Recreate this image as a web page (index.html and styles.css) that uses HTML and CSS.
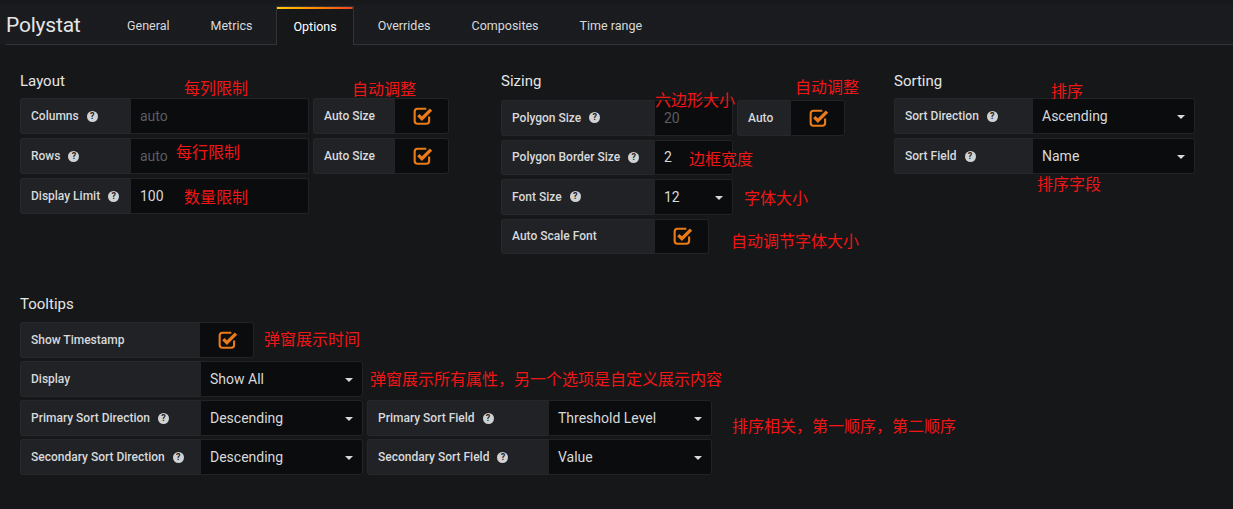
FILE: index.html
```html
<!DOCTYPE html>
<html lang="zh">
<head>
<meta charset="utf-8">
<title>Polystat Options</title>
<link rel="stylesheet" href="styles.css">
</head>
<body>
<div class="page">
  <header class="topbar">
    <div class="topbar-inner">
      <span class="title">Polystat</span>
      <nav class="tabs">
        <span class="tab">General</span>
        <span class="tab">Metrics</span>
        <span class="tab active">Options</span>
        <span class="tab">Overrides</span>
        <span class="tab">Composites</span>
        <span class="tab">Time range</span>
      </nav>
    </div>
  </header>

  <main class="content">
    <div class="sections">
      <section class="sec">
        <h3>Layout</h3>
        <div class="rows">
          <div class="row">
            <div class="field"><span class="lbl w110">Columns <i class="help">?</i></span><span class="inp w179 ph">auto</span></div>
            <div class="field"><span class="lbl w81">Auto Size</span><span class="chk w55"><svg class="cb" viewBox="0 0 18 16"><path d="M12 1.5H4Q1.5 1.5 1.5 4V12.5Q1.5 15 4 15H12Q14.5 15 14.5 12.5V8.5"/><path class="tick" d="M4.8 7.2L8 10.4L16.2 2.2"/></svg></span></div>
          </div>
          <div class="row">
            <div class="field"><span class="lbl w110">Rows <i class="help">?</i></span><span class="inp w179 ph">auto</span></div>
            <div class="field"><span class="lbl w81">Auto Size</span><span class="chk w55"><svg class="cb" viewBox="0 0 18 16"><path d="M12 1.5H4Q1.5 1.5 1.5 4V12.5Q1.5 15 4 15H12Q14.5 15 14.5 12.5V8.5"/><path class="tick" d="M4.8 7.2L8 10.4L16.2 2.2"/></svg></span></div>
          </div>
          <div class="row">
            <div class="field"><span class="lbl w110">Display Limit <i class="help">?</i></span><span class="inp w179">100</span></div>
          </div>
        </div>
      </section>

      <section class="sec sizing">
        <h3>Sizing</h3>
        <div class="rows">
          <div class="row">
            <div class="field"><span class="lbl w153">Polygon Size <i class="help">?</i></span><span class="inp w79 ph">20</span></div>
            <div class="field"><span class="lbl w53">Auto</span><span class="chk w55"><svg class="cb" viewBox="0 0 18 16"><path d="M12 1.5H4Q1.5 1.5 1.5 4V12.5Q1.5 15 4 15H12Q14.5 15 14.5 12.5V8.5"/><path class="tick" d="M4.8 7.2L8 10.4L16.2 2.2"/></svg></span></div>
          </div>
          <div class="row">
            <div class="field"><span class="lbl w153">Polygon Border Size <i class="help">?</i></span><span class="inp w79">2</span></div>
          </div>
          <div class="row">
            <div class="field"><span class="lbl w153">Font Size <i class="help">?</i></span><span class="inp sel w79">12<i class="caret"></i></span></div>
          </div>
          <div class="row">
            <div class="field"><span class="lbl w153">Auto Scale Font</span><span class="chk w55"><svg class="cb" viewBox="0 0 18 16"><path d="M12 1.5H4Q1.5 1.5 1.5 4V12.5Q1.5 15 4 15H12Q14.5 15 14.5 12.5V8.5"/><path class="tick" d="M4.8 7.2L8 10.4L16.2 2.2"/></svg></span></div>
          </div>
        </div>
      </section>

      <section class="sec">
        <h3>Sorting</h3>
        <div class="rows">
          <div class="row">
            <div class="field"><span class="lbl w138">Sort Direction <i class="help">?</i></span><span class="inp sel w163">Ascending<i class="caret"></i></span></div>
          </div>
          <div class="row">
            <div class="field"><span class="lbl w138">Sort Field <i class="help">?</i></span><span class="inp sel w163">Name<i class="caret"></i></span></div>
          </div>
        </div>
      </section>
    </div>

    <section class="sec tooltips">
      <h3>Tooltips</h3>
      <div class="rows">
        <div class="row">
          <div class="field"><span class="lbl w179">Show Timestamp</span><span class="chk w55"><svg class="cb" viewBox="0 0 18 16"><path d="M12 1.5H4Q1.5 1.5 1.5 4V12.5Q1.5 15 4 15H12Q14.5 15 14.5 12.5V8.5"/><path class="tick" d="M4.8 7.2L8 10.4L16.2 2.2"/></svg></span></div>
        </div>
        <div class="row">
          <div class="field"><span class="lbl w180">Display</span><span class="inp sel w163">Show All<i class="caret"></i></span></div>
        </div>
        <div class="row">
          <div class="field"><span class="lbl w180">Primary Sort Direction <i class="help">?</i></span><span class="inp sel w163">Descending<i class="caret"></i></span></div>
          <div class="field"><span class="lbl w181">Primary Sort Field <i class="help">?</i></span><span class="inp sel w164">Threshold Level<i class="caret"></i></span></div>
        </div>
        <div class="row">
          <div class="field"><span class="lbl w180">Secondary Sort Direction <i class="help">?</i></span><span class="inp sel w163">Descending<i class="caret"></i></span></div>
          <div class="field"><span class="lbl w181">Secondary Sort Field <i class="help">?</i></span><span class="inp sel w164">Value<i class="caret"></i></span></div>
        </div>
      </div>
    </section>
  </main>

  <div class="notes">
    <span class="note n1">每列限制</span>
    <span class="note n2">自动调整</span>
    <span class="note n3">每行限制</span>
    <span class="note n4">数量限制</span>
    <span class="note n5">六边形大小</span>
    <span class="note n6">自动调整</span>
    <span class="note n7">边框宽度</span>
    <span class="note n8">字体大小</span>
    <span class="note n9">自动调节字体大小</span>
    <span class="note n10">排序</span>
    <span class="note n11">排序字段</span>
    <span class="note n12">弹窗展示时间</span>
    <span class="note n13">弹窗展示所有属性，另一个选项是自定义展示内容</span>
    <span class="note n14">排序相关，第一顺序，第二顺序</span>
  </div>
</div>
</body>
</html>
```

FILE: styles.css
```css
* { box-sizing: border-box; }

html, body {
  margin: 0;
  padding: 0;
  background: #161719;
}

body {
  font-family: Roboto, "Noto Sans", "Liberation Sans", sans-serif;
  color: #d8d9da;
  width: 1233px;
  height: 509px;
  overflow: hidden;
}

.page {
  position: relative;
  width: 1233px;
  height: 509px;
}

/* ---------- top bar ---------- */
.topbar {
  padding-top: 6px;
  background: linear-gradient(180deg, #161719 0, #1a1b1e 6px, #1b1c1f 100%);
}

.topbar-inner {
  margin-left: 6px;
  height: 39px;
  display: flex;
  align-items: stretch;
  border-bottom: 1px solid #323336;
}

.title {
  width: 104px;
  font-size: 21px;
  line-height: 38px;
  color: #e4e5e6;
  letter-spacing: -0.2px;
}

.tabs {
  display: flex;
  gap: 7px;
}

.tab {
  display: flex;
  align-items: center;
  padding: 0 16px;
  height: 38px;
  font-size: 12.5px;
  color: #d8d9da;
  border: 1px solid transparent;
  border-bottom: none;
}

.tab.active {
  height: 39px;
  margin-bottom: -1px;
  color: #ffffff;
  border-color: #323336;
  background: linear-gradient(90deg, #ffcc00 0%, #ff8a00 50%, #f0461e 100%) top / 100% 2px no-repeat, #161719;
  padding-top: 1px;
}

/* ---------- content ---------- */
.content {
  padding: 27px 0 0 20px;
}

.sections {
  display: grid;
  grid-template-columns: 481px 393px 1fr;
}

h3 {
  margin: 0 0 8px;
  font-size: 15px;
  font-weight: 400;
  line-height: 18px;
  color: #e4e5e6;
}

.rows {
  display: flex;
  flex-direction: column;
  gap: 4px;
}

.sizing .rows { padding-top: 2px; gap: 4px; }
.sizing .field { height: 35.5px; }

.row {
  display: flex;
  gap: 4px;
}

.field {
  display: flex;
  height: 36px;
}

.lbl {
  display: flex;
  align-items: center;
  height: 100%;
  padding: 0 10px;
  background: #202226;
  border: 1px solid #26282b;
  border-right: none;
  border-radius: 3px 0 0 3px;
  font-size: 12px;
  font-weight: 500;
  color: #d8d9da;
  white-space: nowrap;
}

.help {
  display: inline-flex;
  align-items: center;
  justify-content: center;
  width: 11px;
  height: 11px;
  margin-left: 8px;
  border-radius: 50%;
  background: #d0d1d3;
  color: #202226;
  font-style: normal;
  font-size: 9px;
  font-weight: 700;
  line-height: 1;
}

.inp {
  display: flex;
  align-items: center;
  height: 100%;
  padding: 0 9px;
  background: #0b0c0e;
  border: 1px solid #222326;
  border-radius: 0 3px 3px 0;
  font-size: 14px;
  color: #d8d9da;
  white-space: nowrap;
}

.inp.ph { color: #5c5d60; }

.sel { justify-content: space-between; }

.caret {
  width: 0;
  height: 0;
  border-left: 4px solid transparent;
  border-right: 4px solid transparent;
  border-top: 4px solid #d8d9da;
  margin-top: 2px;
}

.chk {
  display: flex;
  align-items: center;
  justify-content: center;
  height: 100%;
  background: #0b0c0e;
  border: 1px solid #222326;
  border-radius: 0 3px 3px 0;
}

.cb {
  width: 20px;
  height: 18px;
  margin-left: 2px;
  fill: none;
  stroke: #eb7b18;
  stroke-width: 1.9;
}

.cb .tick { stroke-width: 3; }

.w53 { width: 53px; }
.w55 { width: 55px; }
.w79 { width: 79px; }
.w81 { width: 81px; }
.w110 { width: 110px; }
.w138 { width: 138px; }
.w153 { width: 153px; }
.w163 { width: 163px; }
.w164 { width: 164px; }
.w179 { width: 179px; }
.w180 { width: 180px; }
.w181 { width: 181px; }

.tooltips { margin-top: 41px; }
.tooltips h3 { margin-bottom: 9px; }
.tooltips .rows { gap: 3px; }

/* ---------- annotations (overlay) ---------- */
.notes {
  position: absolute;
  inset: 0;
  pointer-events: none;
}

.note {
  position: absolute;
  font-family: "Noto Sans CJK SC", "Noto Sans CJK JP", sans-serif;
  font-size: 16px;
  line-height: 16px;
  color: #f01616;
  white-space: nowrap;
}

.n1 { left: 184px; top: 79px; }
.n2 { left: 352px; top: 80px; }
.n3 { left: 176px; top: 143px; }
.n4 { left: 184px; top: 188px; }
.n5 { left: 655px; top: 91px; }
.n6 { left: 795px; top: 78px; }
.n7 { left: 689px; top: 150px; }
.n8 { left: 744px; top: 189px; }
.n9 { left: 731px; top: 232px; }
.n10 { left: 1051px; top: 82px; }
.n11 { left: 1037px; top: 175px; }
.n12 { left: 264px; top: 330px; }
.n13 { left: 370px; top: 370px; }
.n14 { left: 732px; top: 417px; }
```
